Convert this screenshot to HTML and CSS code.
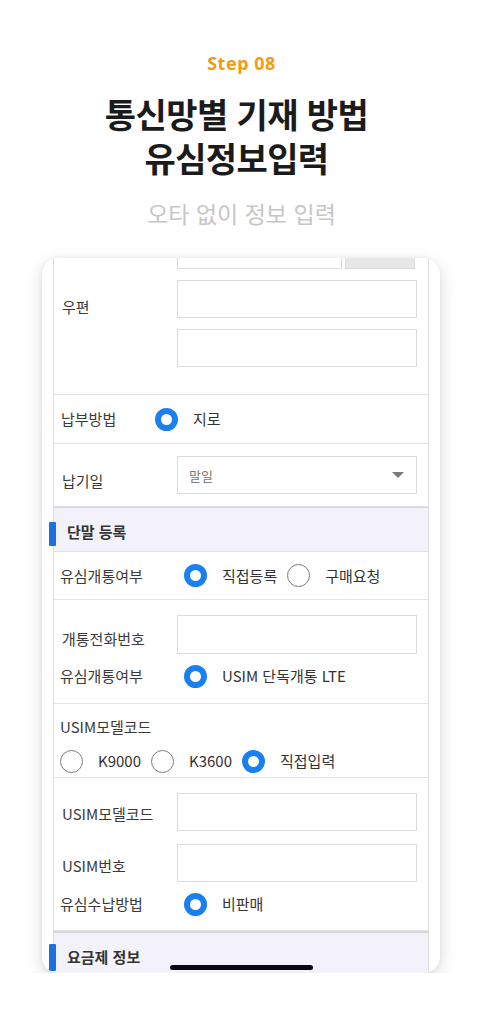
FILE: index.html
```html
<!DOCTYPE html>
<html lang="ko">
<head>
<meta charset="utf-8">
<title>Step 08 유심정보입력</title>
<link rel="stylesheet" href="styles.css">
</head>
<body>
<header class="intro">
  <div class="step">Step 08</div>
  <h1 class="title"><span class="tl">통신망별 기재 방법</span><span class="tl">유심정보입력</span></h1>
  <p class="sub">오타 없이 정보 입력</p>
</header>

<section class="card">
  <div class="panel">
    <div class="row row-zip">
      <div class="lbl zl">우편</div>
      <div class="field stack">
        <div class="zipline">
          <div class="input zip"></div>
          <div class="btn"></div>
        </div>
        <div class="input"></div>
        <div class="input"></div>
      </div>
    </div>

    <div class="row row-pay">
      <div class="lbl narrow">납부방법</div>
      <div class="opts">
        <label class="opt"><span class="radio on"></span>지로</label>
      </div>
    </div>

    <div class="row row-due">
      <div class="lbl low">납기일</div>
      <div class="field">
        <div class="select"><span>말일</span><span class="caret"></span></div>
      </div>
    </div>

    <div class="sec">단말 등록</div>

    <div class="row row-usim">
      <div class="lbl tight">유심개통여부</div>
      <div class="opts ind">
        <label class="opt"><span class="radio on"></span>직접등록</label>
        <label class="opt"><span class="radio"></span>구매요청</label>
      </div>
    </div>

    <div class="row multi g1">
      <div class="line l-input">
        <div class="lbl">개통전화번호</div>
        <div class="field"><div class="input"></div></div>
      </div>
      <div class="line l-radio">
        <div class="lbl tight">유심개통여부</div>
        <div class="opts ind">
          <label class="opt"><span class="radio on"></span>USIM 단독개통 LTE</label>
        </div>
      </div>
    </div>

    <div class="row multi g2">
      <div class="lbl tight block">USIM모델코드</div>
      <div class="opts wide">
        <label class="opt"><span class="radio"></span>K9000</label>
        <label class="opt"><span class="radio"></span>K3600</label>
        <label class="opt"><span class="radio on"></span>직접입력</label>
      </div>
    </div>

    <div class="row multi g3">
      <div class="line l-input">
        <div class="lbl">USIM모델코드</div>
        <div class="field"><div class="input"></div></div>
      </div>
      <div class="line l-input second">
        <div class="lbl">USIM번호</div>
        <div class="field"><div class="input"></div></div>
      </div>
      <div class="line l-radio last">
        <div class="lbl tight">유심수납방법</div>
        <div class="opts ind">
          <label class="opt"><span class="radio on"></span>비판매</label>
        </div>
      </div>
    </div>

    <div class="sec sec2">요금제 정보</div>
  </div>
  <div class="home"></div>
</section>
</body>
</html>
```

FILE: styles.css
```css
* { box-sizing: border-box; }

body {
  margin: 0;
  background: #ffffff;
  font-family: "Noto Sans CJK KR", "Noto Sans", sans-serif;
  color: #333333;
}

.intro {
  padding-top: 53px;
  text-align: center;
}

.step {
  font-family: "Noto Sans", "Noto Sans CJK KR", sans-serif;
  font-size: 18px;
  line-height: 20px;
  font-weight: 700;
  color: #f29c14;
  letter-spacing: 0.5px;
}

.title {
  margin: 19px 0 0;
  padding-right: 10px;
  font-size: 34px;
  line-height: 44px;
  font-weight: 700;
  color: #1b1b1b;
  letter-spacing: -0.6px;
}
.tl { display: block; height: 44px; }

.sub {
  margin: 19px 0 0;
  font-size: 23px;
  line-height: 28px;
  font-weight: 400;
  color: #c6c6c6;
}

.card {
  position: relative;
  margin: 31px 43px 0 42px;
  height: 715px;
  border-radius: 16px;
  overflow: hidden;
  background: #ffffff;
  box-shadow: 0 6px 18px rgba(0, 0, 0, 0.14), 0 0 5px rgba(0, 0, 0, 0.06);
}

.panel {
  margin: -39px 11px 0;
  border-left: 1px solid #dedede;
  border-right: 1px solid #dedede;
}

.row {
  display: flex;
  align-items: center;
  border-bottom: 1px solid #e3e3e3;
  font-size: 15px;
}

.lbl {
  flex: 0 0 123px;
  padding-left: 8px;
  color: #3a3a3a;
  font-size: 15px;
  line-height: 20px;
  white-space: nowrap;
}
.lbl.tight { padding-left: 6px; }
.lbl.narrow { flex-basis: 101px; padding-left: 7px; }
.lbl.low { padding-top: 12px; }
.lbl.zl { padding-top: 16px; }

.field { flex: 0 0 240px; }

.input {
  height: 38px;
  border: 1px solid #dcdcdc;
  background: #ffffff;
}

.stack { display: flex; flex-direction: column; gap: 11px; }

.zipline { display: flex; gap: 3px; }
.zip { flex: 0 0 165px; }
.btn {
  flex: 0 0 70px;
  height: 38px;
  background: #e7e7e7;
  border: 1px solid #dadada;
}

.row-zip { height: 176px; padding: 12px 0 28px; }
.row-pay { height: 49px; }
.row-due { height: 63px; }

.select {
  height: 38px;
  border: 1px solid #dcdcdc;
  display: flex;
  align-items: center;
  justify-content: space-between;
  padding: 0 12px 0 11px;
  font-size: 13px;
  color: #7a7a7a;
}
.caret {
  width: 0;
  height: 0;
  border-left: 6px solid transparent;
  border-right: 6px solid transparent;
  border-top: 6px solid #7b7b7b;
}

.sec {
  position: relative;
  height: 45px;
  display: flex;
  align-items: center;
  padding: 4px 0 0 13px;
  background: #f3f2fb;
  border-top: 1px solid #d6d6d6;
  border-bottom: 1px solid #e3e3e3;
  font-size: 15px;
  font-weight: 700;
  color: #333333;
}
.sec::before {
  content: "";
  position: absolute;
  left: -5px;
  top: 14px;
  width: 7px;
  height: 24px;
  background: #1f70df;
  border-radius: 1px;
}
.sec2 { border-top: 2px solid #d6d6d6; }
.sec2::before { top: 11px; height: 27px; }

.opts { display: flex; align-items: center; gap: 10px; }
.opts.ind { padding-left: 7px; }
.opt {
  display: flex;
  align-items: center;
  gap: 15px;
  font-size: 15px;
  color: #333333;
  line-height: 24px;
}

.radio {
  width: 23px;
  height: 23px;
  border-radius: 50%;
  border: 1.5px solid #7d7d7d;
  background: #ffffff;
  flex: none;
}
.radio.on {
  border: 6px solid #1a7ff0;
}

.row-usim { height: 48px; }

.multi { flex-direction: column; align-items: stretch; }
.line { display: flex; align-items: center; }

.g1 { padding: 15px 0 11px; }
.g1 .l-input { height: 39px; }
.g1 .l-input .input { height: 39px; }
.g1 .l-input .lbl { padding-top: 8px; }
.g1 .l-radio { height: 32px; margin-top: 6px; }

.g2 { padding: 12px 0 4px; }
.g2 .block { flex: none; line-height: 22px; }
.g2 .wide { margin-top: 11px; padding-left: 6px; }

.g3 { padding: 15px 0 10px; }
.g3 .l-input { height: 38px; }
.g3 .l-input .lbl { padding-top: 3px; }
.g3 .second { margin-top: 13px; }
.g3 .second .lbl { padding-top: 6px; }
.g3 .last { height: 32px; margin-top: 6px; }

.home {
  position: absolute;
  left: 50%;
  bottom: 3px;
  width: 143px;
  height: 5px;
  margin-left: -71px;
  border-radius: 3px;
  background: #0a0a0a;
}
```
